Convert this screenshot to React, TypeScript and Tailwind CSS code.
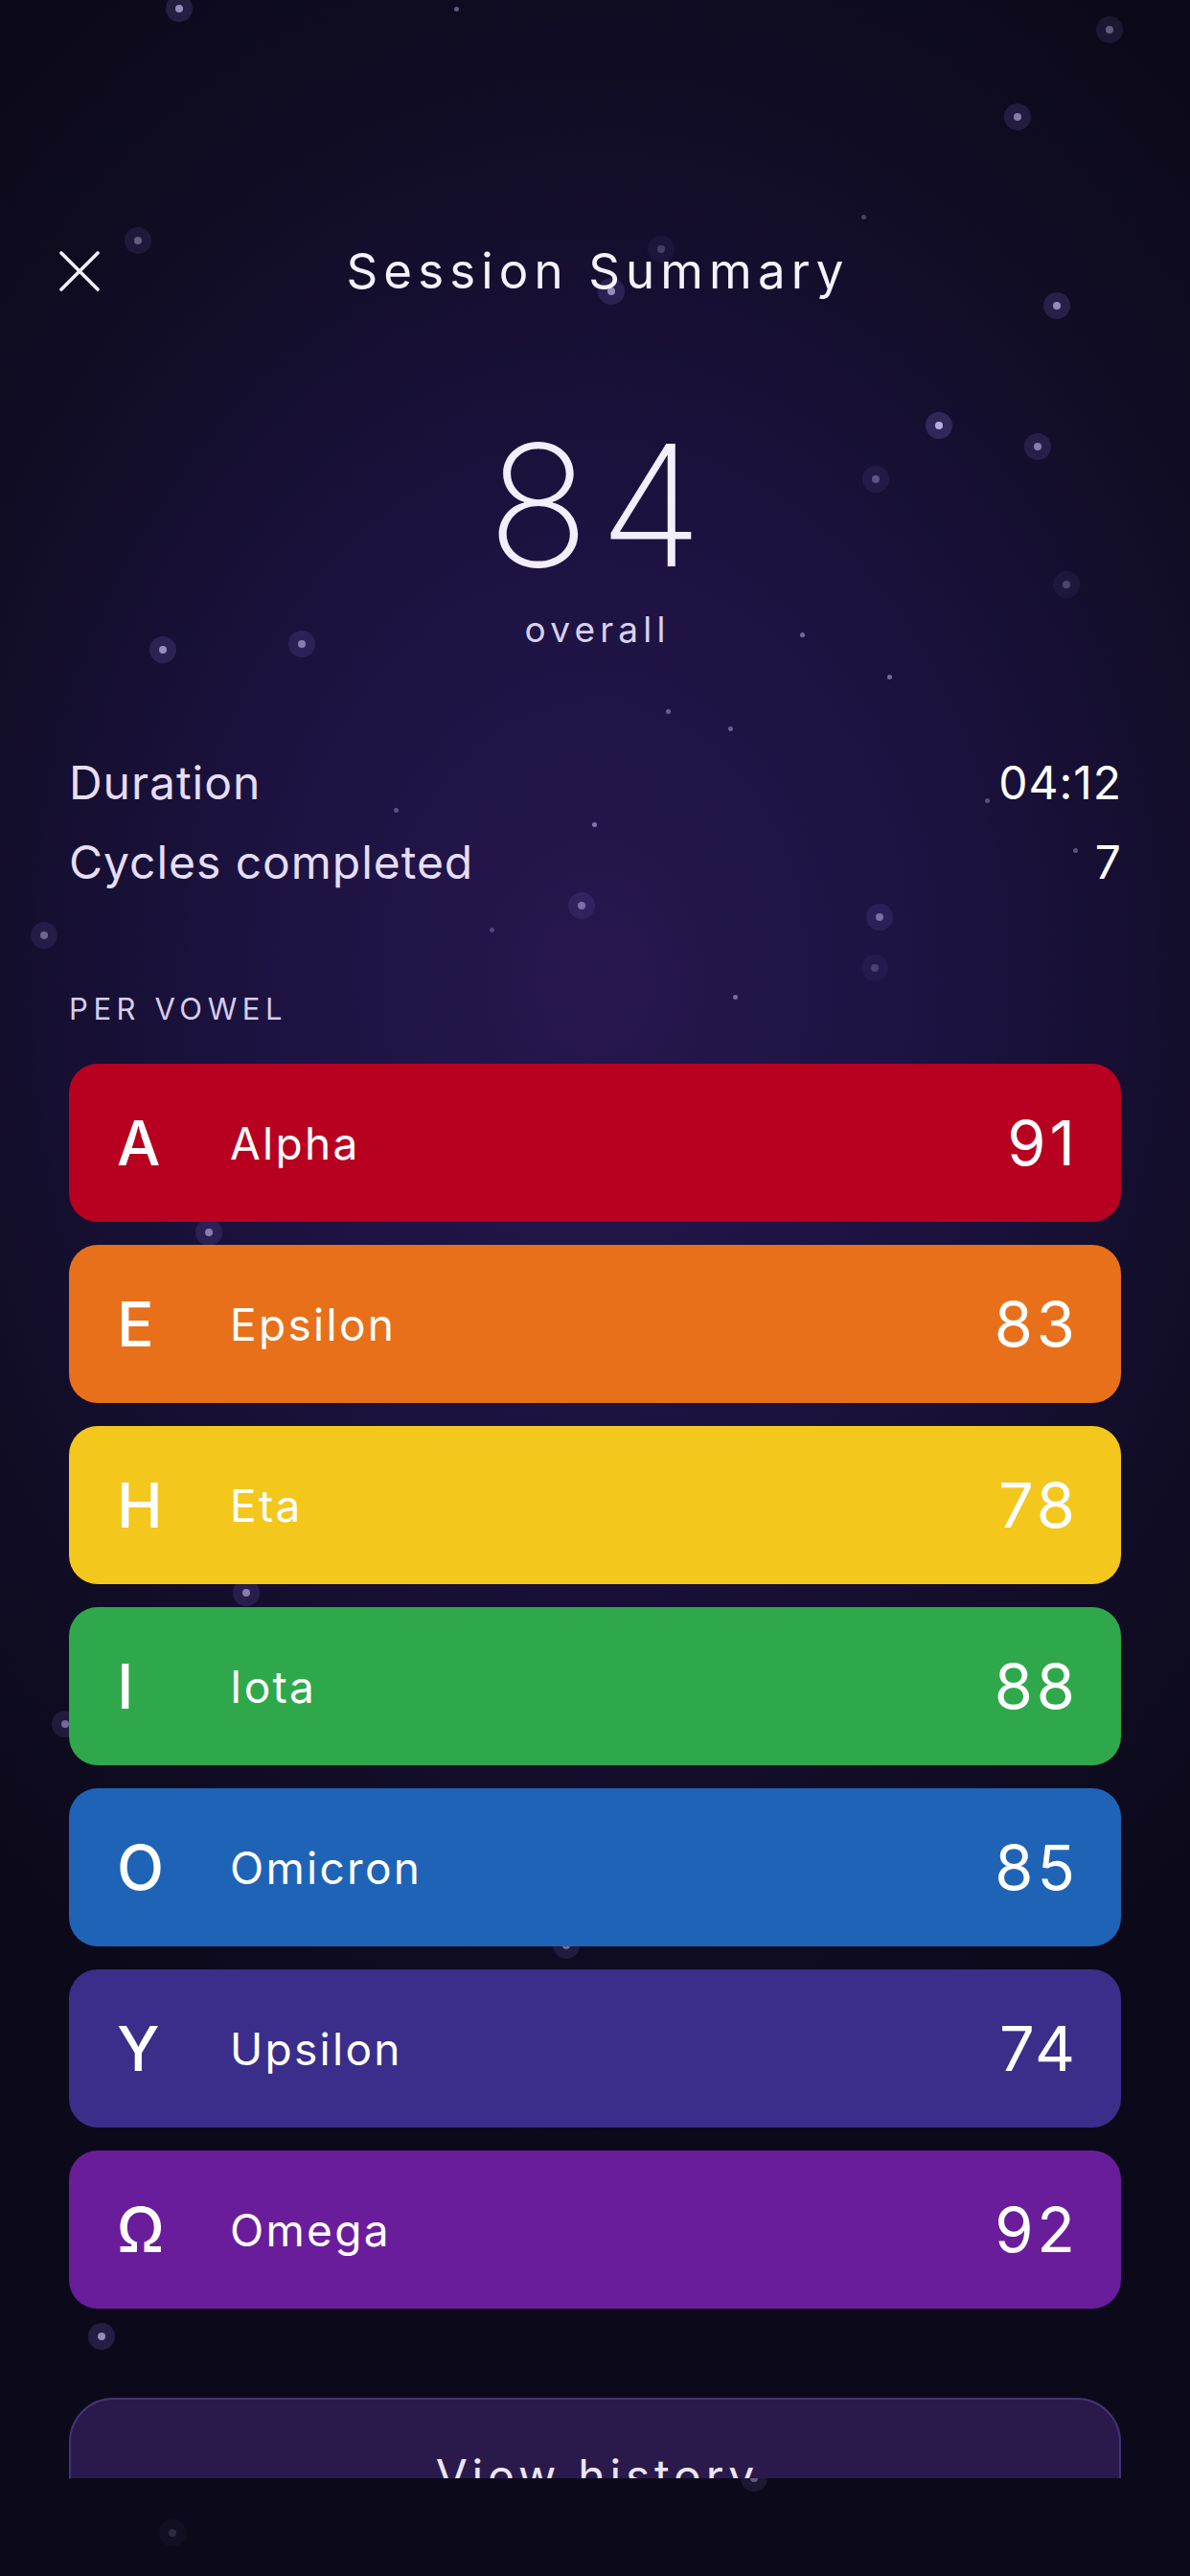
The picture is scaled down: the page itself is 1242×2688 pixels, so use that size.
import React from 'react';

type Vowel = {
  letter: string;
  name: string;
  score: number;
  color: string;
};

const vowels: Vowel[] = [
  { letter: 'A', name: 'Alpha', score: 91, color: 'bg-[#b80020]' },
  { letter: 'E', name: 'Epsilon', score: 83, color: 'bg-[#e8701a]' },
  { letter: 'H', name: 'Eta', score: 78, color: 'bg-[#f3c71c]' },
  { letter: 'I', name: 'Iota', score: 88, color: 'bg-[#2fa84b]' },
  { letter: 'O', name: 'Omicron', score: 85, color: 'bg-[#1f63b7]' },
  { letter: 'Y', name: 'Upsilon', score: 74, color: 'bg-[#3a2e8a]' },
  { letter: 'Ω', name: 'Omega', score: 92, color: 'bg-[#6a1d9a]' },
];

// x, y, halo?, opacity
const stars: [number, number, boolean, number][] = [
  [187, 9, true, 0.8],
  [476, 9, false, 0.6],
  [1158, 31, true, 0.5],
  [1062, 122, true, 0.7],
  [144, 251, true, 0.5],
  [690, 260, true, 0.3],
  [638, 304, true, 0.8],
  [1103, 319, true, 0.8],
  [901, 226, false, 0.4],
  [980, 444, true, 1],
  [1083, 466, true, 0.7],
  [914, 500, true, 0.45],
  [1113, 610, true, 0.35],
  [170, 678, true, 0.8],
  [315, 672, true, 0.7],
  [837, 662, false, 0.7],
  [928, 706, false, 0.7],
  [697, 742, false, 0.6],
  [762, 760, false, 0.6],
  [413, 845, false, 0.5],
  [620, 860, false, 0.8],
  [1030, 835, false, 0.5],
  [1122, 887, false, 0.5],
  [607, 945, true, 0.6],
  [918, 957, true, 0.6],
  [46, 976, true, 0.55],
  [513, 970, false, 0.4],
  [767, 1040, false, 0.7],
  [913, 1010, true, 0.3],
  [218, 1286, true, 0.7],
  [257, 1662, true, 0.7],
  [68, 1799, true, 0.6],
  [591, 2030, true, 0.6],
  [106, 2438, true, 0.8],
  [787, 2586, true, 0.5],
  [180, 2643, true, 0.2],
];

function Star({ x, y, halo, opacity }: { x: number; y: number; halo: boolean; opacity: number }) {
  if (!halo) {
    return (
      <div
        className="absolute w-[5px] h-[5px] -ml-[2.5px] -mt-[2.5px] rounded-full bg-[#9d8fc8]"
        style={{ left: x, top: y, opacity }}
      />
    );
  }
  return (
    <div
      className="absolute w-[28px] h-[28px] -ml-[14px] -mt-[14px] rounded-full bg-[#5c4a98]/40 flex items-center justify-center"
      style={{ left: x, top: y, opacity }}
    >
      <div className="w-[8px] h-[8px] rounded-full bg-[#b9abe2]" />
    </div>
  );
}

function CloseIcon() {
  return (
    <svg width="42" height="42" viewBox="0 0 42 42" fill="none">
      <path d="M2 2 L40 40 M40 2 L2 40" stroke="#f4f0fb" strokeWidth="3.6" strokeLinecap="round" />
    </svg>
  );
}

export default function App() {
  return (
    <div className="relative w-[1242px] h-[2688px] overflow-hidden bg-[#0c0a1a] font-['Inter','Noto_Sans',sans-serif] text-white flex flex-col">
      {/* backdrop glow */}
      <div className="absolute inset-0 bg-[radial-gradient(ellipse_75%_45%_at_50%_38%,#27174f_0%,#1c1240_40%,#110d26_75%,#0c0a1a_100%)]" />
      <div className="absolute inset-0">
        {stars.map(([x, y, halo, o], i) => (
          <Star key={i} x={x} y={y} halo={halo} opacity={o} />
        ))}
      </div>

      {/* Scroll area */}
      <div className="relative h-[2586px] shrink-0 overflow-hidden flex flex-col">
        {/* Header */}
        <div className="relative mt-[257px] h-[66px] flex items-center justify-center">
          <button className="absolute left-[62px] top-[5px] w-[42px] h-[42px] flex items-center justify-center">
            <CloseIcon />
          </button>
          <h1 className="text-[51px] leading-none tracking-[0.12em] text-[#f6f2fc] font-normal pl-[0.12em]">
            Session Summary
          </h1>
        </div>

        {/* Overall score */}
        <div className="mt-[131px] flex flex-col items-center">
          <div className="text-[176px] leading-none font-extralight text-[#f3eefc] tracking-[0.06em] pl-[0.06em]">84</div>
          <div className="mt-[23px] text-[37px] leading-none tracking-[0.14em] text-[#d9d0f0] pl-[0.14em]">overall</div>
        </div>

        <div className="px-[72px] flex flex-col">
          {/* Stats */}
          <div className="mt-[118px] flex flex-col gap-[35px]">
            <div className="flex items-center justify-between text-[48px] leading-none tracking-[0.02em]">
              <span className="text-[#e6ddf7]">Duration</span>
              <span className="text-white -mr-[0.02em]">04:12</span>
            </div>
            <div className="flex items-center justify-between text-[48px] leading-none tracking-[0.02em]">
              <span className="text-[#e6ddf7]">Cycles completed</span>
              <span className="text-white -mr-[0.02em]">7</span>
            </div>
          </div>

          {/* Per vowel */}
          <div className="mt-[113px] text-[31px] leading-none tracking-[0.18em] text-[#d7cdea]">PER VOWEL</div>

          <div className="mt-[42px] flex flex-col gap-[24px]">
            {vowels.map((v) => (
              <div
                key={v.name}
                className={`h-[165px] rounded-[30px] ${v.color} flex items-center pl-[50px] pr-[48px]`}
              >
                <span className="w-[118px] text-[64px] leading-none font-medium text-white">{v.letter}</span>
                <span className="flex-1 text-[46px] leading-none tracking-[0.05em] text-white">{v.name}</span>
                <span className="text-[65px] leading-none tracking-[0.06em] -mr-[0.06em] text-white">{v.score}</span>
              </div>
            ))}
          </div>

          <button className="mt-[93px] h-[164px] shrink-0 rounded-[46px] bg-[#2a1a4b] border-2 border-[#43327a] flex items-center justify-center">
            <span className="text-[48px] leading-none tracking-[0.1em] text-[#ece6f8] pl-[0.1em]">View history</span>
          </button>
        </div>
      </div>

      <div className="relative flex-1" />
    </div>
  );
}
